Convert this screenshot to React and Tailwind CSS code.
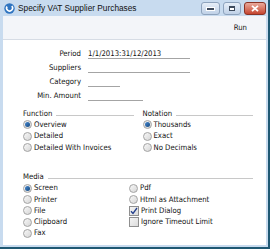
import React from "react";

function Radio({ checked, label }) {
  return (
    <div className="flex items-center h-[11.3px]">
      <div className="w-[9px] h-[9px] rounded-full border border-[#a3a3a3] bg-gradient-to-br from-[#f8f8f8] to-[#d6d6d6] flex items-center justify-center shrink-0">
        {checked && (
          <div className="w-[5px] h-[5px] rounded-full bg-gradient-to-br from-[#4a8ad0] to-[#12487f]" />
        )}
      </div>
      <span className="ml-[2px] leading-none">{label}</span>
    </div>
  );
}

function Check({ checked, label }) {
  return (
    <div className="flex items-center h-[11.3px]">
      <div className="w-[10px] h-[10px] border border-[#8f8f8f] bg-gradient-to-br from-[#f4f4f4] to-[#dcdcdc] flex items-center justify-center shrink-0">
        {checked && (
          <svg width="8" height="8" viewBox="0 0 8 8">
            <path d="M1 4.2 L3 6.5 L7 1" stroke="#233f8c" strokeWidth="1.3" fill="none" />
          </svg>
        )}
      </div>
      <span className="ml-[2px] leading-none">{label}</span>
    </div>
  );
}

function Header({ label }) {
  return (
    <div className="flex items-center h-[11.3px]">
      <span className="leading-none">{label}</span>
      <div className="flex-1 ml-[4px] mt-[3px] h-px bg-[#c8c8c8]" />
    </div>
  );
}

function Field({ label, value, w }) {
  return (
    <div className="flex items-center h-[14px]">
      <div className="w-[78px] text-right leading-none">{label}</div>
      <div className={`ml-[7px] h-[10px] border-b border-[#a4a4a4] leading-[9px] ${w}`}>{value}</div>
    </div>
  );
}

export default function App() {
  return (
    <div className="w-[270px] h-[249px] bg-[#c8dbef] flex flex-col border-r-2 border-b-2 border-[#1f5873] font-['DejaVu_Sans_Condensed','Liberation_Sans',Arial,sans-serif] text-[7.7px] text-[#111]">
      {/* title bar */}
      <div className="h-[16px] flex items-start shrink-0">
        <div className="flex items-center h-[17px] pl-[4px]">
          <svg width="11" height="11" viewBox="0 0 11 11">
            <circle cx="5.5" cy="5.5" r="5.2" fill="#2f74c0" />
            <path d="M3 3.5 A3 3 0 1 0 7.8 3" stroke="#ffffff" strokeWidth="1.6" fill="none" />
          </svg>
          <span className="ml-[3px] text-[8.3px] text-[#111] leading-none font-['Liberation_Sans',Arial,sans-serif]">Specify VAT Supplier Purchases</span>
        </div>
        <div className="ml-auto flex pt-[2px] pr-[2px] gap-[3px]">
          <div className="w-[19px] h-[13px] rounded-[3px] border border-[#8ea3bd] bg-gradient-to-b from-[#e6eef8] to-[#bfd1e7] flex items-end justify-center pb-[3px]">
            <div className="w-[7px] h-[2px] bg-[#3d4a5c] border border-white box-content" />
          </div>
          <div className="w-[18px] h-[13px] rounded-[3px] border border-[#8ea3bd] bg-gradient-to-b from-[#e6eef8] to-[#bfd1e7] flex items-center justify-center">
            <div className="w-[6px] h-[5px] border-[1.5px] border-[#3d4a5c] border-t-2 bg-white" />
          </div>
          <div className="w-[22px] h-[13px] rounded-[3px] border border-[#8b3325] bg-gradient-to-b from-[#e9a99b] to-[#c4432f] flex items-center justify-center">
            <svg width="8" height="7" viewBox="0 0 8 7">
              <path d="M1 0.8 L7 6.2 M7 0.8 L1 6.2" stroke="#ffffff" strokeWidth="1.8" />
            </svg>
          </div>
        </div>
      </div>

      <div className="flex-1 flex flex-col ml-[3px] mr-[2px] mb-[2px]">
        {/* toolbar */}
        <div className="h-[24px] shrink-0 bg-[#f3f5f9] border-b border-[#d6dce5] flex items-center justify-end pr-[19px]">
          <span className="leading-none">Run</span>
        </div>

        {/* content */}
        <div className="flex-1 bg-white pt-[7px] flex flex-col">
          <Field label="Period" value="1/1/2013:31/12/2013" w="w-[102px]" />
          <Field label="Suppliers" value="" w="w-[102px]" />
          <Field label="Category" value="" w="w-[32px]" />
          <Field label="Min. Amount" value="" w="w-[55px]" />

          <div className="mt-[5px] pl-[20px] pr-[13px] grid grid-cols-2 gap-x-[9px]">
            <div className="flex flex-col">
              <Header label="Function" />
              <Radio checked label="Overview" />
              <Radio label="Detailed" />
              <Radio label="Detailed With Invoices" />
            </div>
            <div className="flex flex-col">
              <Header label="Notation" />
              <Radio checked label="Thousands" />
              <Radio label="Exact" />
              <Radio label="No Decimals" />
            </div>
          </div>

          <div className="mt-[18px] pl-[20px] pr-[13px] flex flex-col">
            <Header label="Media" />
            <div className="flex">
              <div className="w-[106px] flex flex-col">
                <Radio checked label="Screen" />
                <Radio label="Printer" />
                <Radio label="File" />
                <Radio label="Clipboard" />
                <Radio label="Fax" />
              </div>
              <div className="flex flex-col">
                <Radio label="Pdf" />
                <Radio label="Html as Attachment" />
                <Check checked label="Print Dialog" />
                <Check label="Ignore Timeout Limit" />
              </div>
            </div>
          </div>
        </div>
      </div>
    </div>
  );
}
